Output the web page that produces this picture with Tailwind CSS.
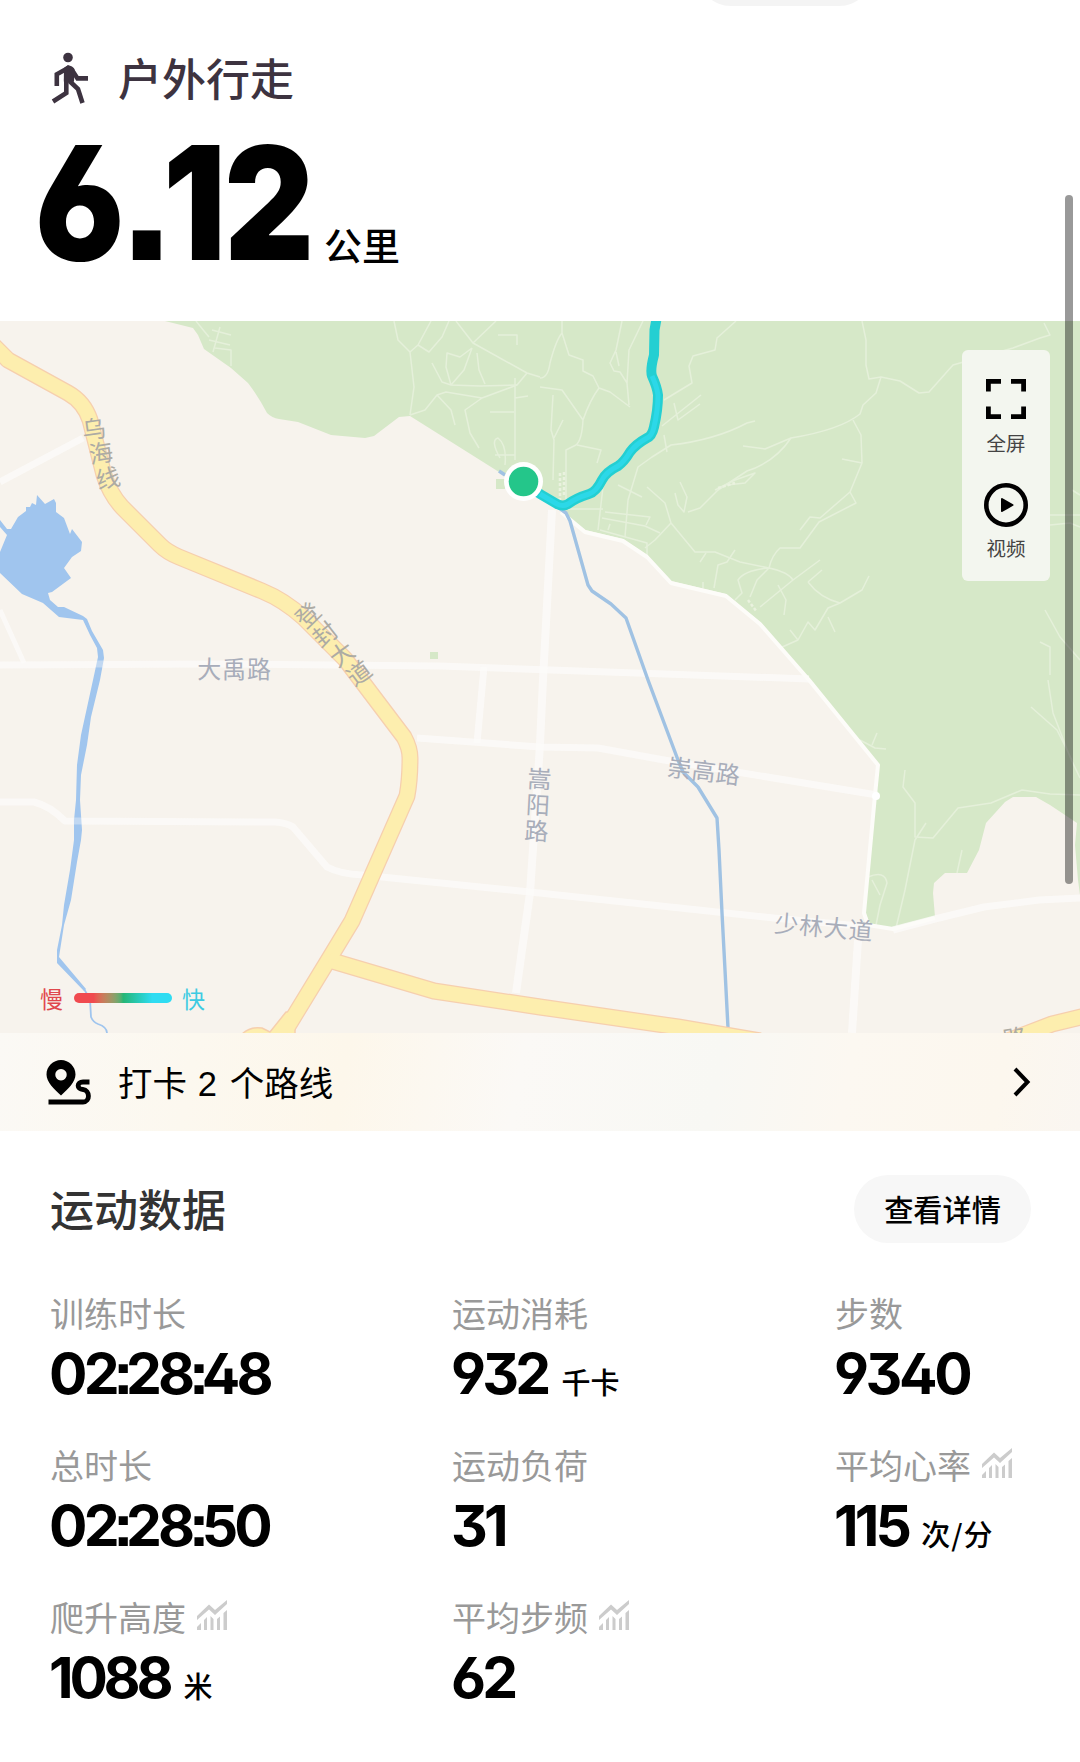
<!DOCTYPE html>
<html lang="zh-CN">
<head>
    <meta charset="UTF-8">
    <meta name="viewport" content="width=device-width, initial-scale=1.0">
    <title>户外行走</title>
    <script src="https://cdn.jsdelivr.net/npm/@tailwindcss/browser@4"></script>
</head>
<body class="relative h-[1762px] w-[1080px] overflow-hidden bg-white font-['Noto_Sans_CJK_SC',sans-serif] text-black">
    <!-- Header -->
    <header class="h-[321px] px-[51px] pt-12">
        <div class="flex h-[60px] items-center">
            <svg class="h-[52px] w-[38px]" viewBox="0 0 38 52" fill="none" stroke="#3d3340" stroke-width="4.6">
                <circle cx="17" cy="5.500" r="4.800" fill="#3d3340" stroke="none" />
                <path d="M17 13 L21 14.500 L23.500 17 L23 29.500 L20 31 L12.800 29.500 L13 16 Z" fill="#3d3340" stroke="none" />
                <path d="M18 15.500 L5.800 22.300 V34" />
                <path d="M20 16.500 L26.500 26.400 H37" />
                <path d="M15.300 27 V41 L2 49.500" />
                <path d="M18.500 29 L27 37 L31.500 51" />
            </svg>
            <h1 class="mb-[2px] ml-[29px] text-[44px] leading-[60px] font-medium text-[#3d3340]">户外行走</h1>
        </div>
        <div class="mt-[35px] -ml-4 flex items-baseline">
            <span class="w-[289px] shrink-0 origin-left scale-x-[.88] font-['Inter'] text-[158px] leading-[120px] font-black whitespace-nowrap [font-feature-settings:'cv03','cv04','ss07']"><span class="tracking-[-4px]">6</span><span class="tracking-[-11px]">.</span><span class="tracking-[-2px]">1</span>2</span>
            <span class="text-[38px] leading-[50px] font-medium">公里</span>
        </div>
    </header>

    <!-- Map -->
    <section class="relative h-[712px] overflow-hidden">
        <svg class="block h-[712px] w-[1080px]" viewBox="0 321 1080 712" fill="none">
            <rect y="321" width="1080" height="712" fill="#f7f3ed" />
            <!-- Forest -->
            <path fill="#d6e8c8" d="M165 321 L193 328 L198 335 L204 349 L231 368 L248 383 Q258 396 267 413 Q272 418 279 419 L298 422 L331 435 L365 438 L374 436 L399 417 L410 416 L499 472 L523 487 L561 510 L569 517 L585 530 L623 539 L647 555 L671 581 L726 594 L760 622 L809 680 L879 765 L876 795 L865 913 L871 925 L893 928 L935 917 L933 893 L934 883 L945 873 L967 873 L979 850 L986 823 L1005 802 L1013 797 L1036 797 L1050 805 L1077 823 L1075 845 L1078 880 L1080 895 V321 Z" />
            <!-- Trails -->
            <g stroke="#e5f0da" stroke-width="1.5" stroke-linejoin="round">
                <path d="M220 327 L213 352 M212 330 L231 335 M209 340 L230 345 M215 348 L231 350 V366 M196 321 L204 331 L209 337" />
                <path d="M394 321 L398 340 L410 352 L418 345 L431 321 M410 352 L414 387 L410 415 M418 345 L429 352 L442 337 L449 321" />
                <path d="M456 321 L473 343 L527 373 L540 377 M473 343 L496 321 M472 348 L460 357 L447 353 L446 367 L451 385 M472 348 L464 370 L451 385 M477 353 L479 370 L485 384 M432 363 L442 382 L451 385 L480 386 L517 385" />
                <path d="M410 415 L425 410 L437 395 L446 392 L482 398 L517 385 L527 373 M515 378 L515 460 M482 398 L465 410 L470 433 L479 448 M437 395 L451 410 L455 425 M498 335 H517 V345 M490 412 H514 M515 398 L528 396 M500 458 Q490 440 498 438 Q507 445 505 465 M495 455 L515 455" />
                <path d="M562 321 L562 333 Q556 340 550 363 Q548 378 540 378 M562 333 L569 355 L583 360 L583 371 L593 376 L599 388 L610 392 L630 407 M540 387 L562 390 L583 420 Q590 400 599 388 M583 420 Q582 440 576 445 L566 450 L566 505 M553 395 L551 430 L554 440 L553 480 M563 420 L554 438 M577 445 L601 450 L597 463" />
                <path d="M622 321 L616 350 L610 363 L614 371 L620 372 L627 383 M643 321 L629 350 L627 383 L629 405 M616 352 L619 366" />
                <path d="M736 321 L717 338 L715 350 L693 356 L689 366 L692 383 L664 400 M701 395 L662 426 M674 403 L678 420 L700 404 M862 321 L866 340 L866 365 L869 379 L881 377 L900 381 L919 393 L929 392 L953 365 L1013 348 L1040 338 L1050 335 L1044 323" />
                <path d="M881 377 L876 393 L863 405 L860 414 Q840 430 791 438 Q775 462 747 471 L718 490 L700 508 L688 512 M791 438 L765 449 L743 446 M853 420 L861 435 L862 463 L850 492 L856 503 L819 522 L800 548 L780 548 Q772 555 769 568 M862 463 L842 459 M850 492 L820 518 L810 517 L800 530" />
                <path d="M647 487 L665 503 L671 523 L655 540 L645 548 M671 523 L695 552 L715 552 L740 562 L769 568 Q788 572 793 580 L820 560 M769 568 L757 580 L750 597 M769 568 Q745 570 738 580 L742 593 L735 600 M778 585 L786 600 L784 615 M793 580 L760 607 M808 582 Q820 598 840 603 L862 590 L869 576 M840 603 L828 608 L815 630 L808 622 L798 640 L790 630 M828 617 L835 632 M808 582 L822 570 M798 640 L780 648 M755 421 L747 423 Q715 440 671 445 L652 457 L638 467 L628 500 L625 537" />
                <path d="M675 493 L678 505 L684 512 L687 497 L680 482 M715 490 L735 480 L755 473 L745 483 L727 485 M618 485 L642 497 M603 487 L598 530 M605 512 L650 517 L646 525 M602 518 L645 526 L660 533 M610 524 L608 530 M568 509 H603 M600 530 L647 543 L647 555 M700 562 L706 553 M714 588 L718 565 L727 562 L735 550 M703 582 V588 M664 435 L667 452" />
                <path d="M1048 680 L1053 713 L1070 757 L1080 778 M1031 707 L1057 730 L1072 760 M1045 610 L1060 637 L1080 660 M1040 642 L1050 647 V675 M1050 515 H1080 M1050 525 L1070 523 L1080 527 M1072 490 L1080 495" />
                <path d="M905 770 L903 787 L915 803 L915 837 L933 838 L958 808 L991 803 L1022 790 L1050 794 L1080 795 M926 823 L915 840 L905 890 L896 928 M962 850 L957 873 M860 740 L875 748 L886 749 M877 733 L872 745 M868 877 Q885 870 887 883 L880 905 L876 925 M872 880 L880 895" />
            </g>
            <g stroke="#eaf2df" stroke-width="2.500">
                <path d="M560 473 V500 M564 472 V495 M718 488 L735 483 M748 600 L757 612" stroke-dasharray="3 2" />
            </g>
            <!-- Minor roads -->
            <g stroke="#fcfbf9" stroke-opacity=".75" stroke-width="7" stroke-linejoin="round">
                <path d="M0 665 L220 664 L440 666 L809 679" />
                <path d="M0 482 L83 438" />
                <path d="M0 610 L24 663" stroke-width="5" />
                <path d="M552 510 L543 680 L540 745 L530 893 L516 993" stroke-width="8" />
                <path d="M484 667 L477 743" />
                <path d="M0 802 H34 Q50 806 65 821 L275 822 Q287 823 293 827 L327 867 Q340 874 362 875 L530 892 L774 918 L870 927" />
                <path d="M417 738 L540 747 L598 748 L664 760 L877 795" />
                <path d="M858 940 L852 1033" stroke-width="8" />
                <path d="M893 930 L935 919 L984 907 L1039 900 L1080 898" />
            </g>
            <path stroke="#fdfcf9" stroke-width="4" stroke-linejoin="round" d="M561 512 L585 532 L623 541 L647 557 L671 583 L726 596 L760 624 L809 680 L878 765 L875 795 L864 913 L868 925 L893 929 L935 918" />
            <circle cx="876" cy="796" r="4" fill="#fff" />
            <path fill="#d6e8c8" d="M430 652 h8 v7 h-8 Z M496 479 h9 v10 h-9 Z" />
            <!-- Reservoir and streams -->
            <path fill="#a0c5ee" d="M0 520 L7 529 L11 529 L18 517 L26 511 V507 L30 507 L32 503 L36 505 L37 495 L45 504 L54 499 L56 503 L56 512 L64 518 L70 534 L72 529 L82 542 L81 551 L72 557 L64 568 L71 578 L52 592 L48 593 L50 600 L58 607 L64 607 L83 616 L87 619 L92 631 L103 650 L104 658 L100 680 L91 717 L87 745 L81 775 L80 800 L82 830 L81 840 L77 862 L71 900 L64 925 L59 957 L86 989 L84 991 L57 963 L57 950 L62 925 L64 905 L70 870 L74 840 L74 820 L76 800 L77 765 L81 735 L93 680 L98 657 L97 648 L90 635 L83 620 L75 619 L59 617 L43 603 L22 594 L0 573 V552 L7 535 L0 527 Z" />
            <path stroke="#a0c5ee" stroke-width="1.8" d="M84 989 L90 999 L91 1017 Q93 1022 98 1024 Q107 1027 107 1033" />
            <path stroke="#f3f5f7" stroke-opacity=".4" stroke-width="7" d="M96 664 H104 M73 821 H82" />
            <path stroke="#a0c2e3" stroke-width="3.4" stroke-linejoin="round" d="M499 471 L505 475 M552 503 L566 513 L570 521 L588 585 L592 591 L611 604 L626 618 L648 680 L678 760 L683 772 L698 787 L717 818 L719 850 L722 913 L725 970 L728 1028" />
            <!-- Main roads -->
            <g stroke-linejoin="round">
                <g stroke="#f6cfae" stroke-width="17">
                    <path d="M-8 344 L8 360 L68 393 Q84 402 90 420 L104 475 Q110 494 122 507 L160 545 Q167 552 179 557 L262 591 Q284 600 304 618 L345 659 L404 737 Q410 748 410 758 Q410 780 407 796 L352 921 L329 959 L282 1036" />
                    <path d="M329 960 L434 991 L540 1007 L678 1027 L760 1041" />
                    <path d="M1005 1042 L1052 1024 L1085 1016" />
                </g>
                <path fill="#fdeeae" stroke="#f6cfae" stroke-width="1.5" d="M241 1035 Q250 1026 262 1028 L270 1032 L286 1012 H295 V1035 Z" />
                <g stroke="#fdeeae" stroke-width="14.5">
                    <path d="M-8 344 L8 360 L68 393 Q84 402 90 420 L104 475 Q110 494 122 507 L160 545 Q167 552 179 557 L262 591 Q284 600 304 618 L345 659 L404 737 Q410 748 410 758 Q410 780 407 796 L352 921 L329 959 L282 1036" />
                    <path d="M329 960 L434 991 L540 1007 L678 1027 L760 1041" />
                    <path d="M1005 1042 L1052 1024 L1085 1016" />
                </g>
            </g>
            <!-- Road names -->
            <g class="font-['Noto_Sans_CJK_SC',sans-serif] text-[24px]" fill="#a8adba" text-anchor="middle">
                <text x="234.500" y="677.500" letter-spacing="0.8">大禹路</text>
                <text transform="translate(704 771) rotate(7)" y="9" letter-spacing="0.5">崇高路</text>
                <text transform="translate(824 927) rotate(5)" y="9" letter-spacing="0.8">少林大道</text>
                <text transform="translate(539.500 779) rotate(3)" y="9">嵩</text>
                <text transform="translate(538 805) rotate(3)" y="9">阳</text>
                <text transform="translate(536.500 831) rotate(3)" y="9">路</text>
                <g fill="#adaba4">
                    <text transform="translate(94 429) rotate(-8)" y="9">乌</text>
                    <text transform="translate(101 453) rotate(-9)" y="9">海</text>
                    <text transform="translate(108 478) rotate(-13)" y="9">线</text>
                    <text transform="translate(308 615) rotate(-44)" y="9">登</text>
                    <text transform="translate(325 634) rotate(-38)" y="9">封</text>
                    <text transform="translate(342 654) rotate(-36)" y="9">大</text>
                    <text transform="translate(359 673) rotate(-36)" y="9">道</text>
                    <text transform="translate(1015 1038) rotate(-10)" y="9">路</text>
                </g>
            </g>
            <!-- Track -->
            <g stroke-linejoin="round">
                <path stroke="#24cfd2" stroke-width="10" d="M656.500 319 L654.500 330 L654 355 Q650 370 652 376 Q657 387 658 395 Q658 410 654 427 Q652 436 647 438 Q636 444 630 452 Q624 462 618 466 Q606 472 602 480 Q596 492 589 494 Q576 498 568 504 Q563 507 557 504 L540 494 L523 482" />
                <path stroke="#2cd8e8" stroke-width="5" d="M652 376 Q657 387 658 395 Q658 410 654 427 Q652 436 647 438 Q636 444 630 452 Q624 462 618 466 Q606 472 602 480 Q596 492 589 494 Q576 498 568 504 Q563 507 557 504 L540 494" />
            </g>
            <circle cx="523.500" cy="481.500" r="19.500" fill="#fff" />
            <circle cx="523.500" cy="481.500" r="14.800" fill="#24c68a" />
        </svg>

        <!-- Map controls -->
        <div class="absolute top-[29px] left-[962px] flex h-[231px] w-[88px] flex-col items-center rounded-md bg-[#f3f6ef] text-[19.5px] leading-7 text-[#444]">
            <svg class="mt-[29px] h-[40px] w-[40px]" viewBox="0 0 40 40" fill="none" stroke="#000" stroke-width="4.8">
                <path d="M2.400 12.500 V2.400 H15 M25 2.400 H37.600 V12.500 M37.600 27.500 V37.600 H25 M15 37.600 H2.400 V27.500" />
            </svg>
            <span class="mt-[10px]">全屏</span>
            <svg class="mt-[26px] h-[44px] w-[44px]" viewBox="0 0 44 44">
                <circle cx="22" cy="22" r="19.700" fill="none" stroke="#000" stroke-width="4.600" />
                <path d="M18 16 L28.500 22 L18 28 Z" stroke="#000" stroke-width="2" stroke-linejoin="round" />
            </svg>
            <span class="mt-[7px]">视频</span>
        </div>

        <!-- Pace legend -->
        <div class="absolute top-[661px] left-[40px] flex h-8 items-center text-[23px] leading-8">
            <span class="text-[#e0474c]">慢</span>
            <span class="mr-[10px] ml-[11px] h-[10px] w-[98px] rounded-full bg-linear-to-r from-[#f04a4f] from-20% via-[#27b574] via-50% to-[#2fdcf2] to-80%"></span>
            <span class="text-[#3ecbe2]">快</span>
        </div>
    </section>

    <!-- Route check-in -->
    <section class="flex h-[98px] items-center bg-[linear-gradient(100deg,#fbf9f5_0%,#fcf8ef_18%,#fdf7eb_32%,#fbf9f6_48%,#f8f8f4_66%,#fcf8f1_78%,#fcf7ee_92%,#faf6f1_100%)] pr-[49px] pl-[46px]">
        <svg class="h-[45px] w-[45px]" viewBox="0 0 45 45">
            <path fill-rule="evenodd" d="M15 0 C23 0 29.500 6.500 29.500 14.500 C29.500 22 22 29 15 35.500 C8 29 0.500 22 0.500 14.500 C0.500 6.500 7 0 15 0 Z M15 9 a5.700 5.700 0 1 0 0.010 0 Z" />
            <path fill="none" stroke="#000" stroke-width="4.800" d="M43.500 22 H37 C30.500 22 30.500 29.300 37 29.500 C44 30 44.500 42 37 42 H2.500" />
        </svg>
        <span class="ml-[27px] flex-1 text-[34.5px] leading-[50px]">打卡 <span class="mr-[5px] ml-[3px] font-['Liberation_Sans']">2</span> 个路线</span>
        <svg class="h-[30px] w-[18px]" viewBox="0 0 18 30" fill="none" stroke="#000" stroke-width="4">
            <path d="M2 2 L14.500 15 L2 28" />
        </svg>
    </section>

    <!-- Workout data -->
    <section class="pt-11 pl-[50px]">
        <div class="flex h-[68px] items-center justify-between pr-[49px]">
            <h2 class="mb-[3px] text-[44px] leading-[60px] font-medium text-[#333]">运动数据</h2>
            <button class="h-[68px] w-[177px] rounded-full bg-[#f7f7f7] pb-[3px] text-[29.2px] leading-10 font-medium">查看详情</button>
        </div>

        <div class="mt-[46px] grid auto-rows-[152px] grid-cols-[402px_383px_1fr]">
            <div>
                <p class="h-12 text-[34px] leading-12 text-[#999]">训练时长</p>
                <p class="mt-[5px] -ml-px flex h-16 items-baseline leading-16"><span class="font-['Inter'] text-[57px] font-bold tracking-[-3.8px] [font-feature-settings:'cv02','cv03','cv04','cv09','ss07']">02<span class="-mr-[3px] -ml-[2px]">:</span>28<span class="-mr-[3px] -ml-[2px]">:</span>48</span></p>
            </div>
            <div>
                <p class="h-12 text-[34px] leading-12 text-[#999]">运动消耗</p>
                <p class="mt-[5px] -ml-px flex h-16 items-baseline leading-16"><span class="font-['Inter'] text-[57px] font-bold tracking-[-3.8px] [font-feature-settings:'cv02','cv03','cv04','cv09','ss07']">932</span><span class="ml-[14px] text-[29px] font-medium">千卡</span></p>
            </div>
            <div>
                <p class="h-12 text-[34px] leading-12 text-[#999]">步数</p>
                <p class="mt-[5px] -ml-px flex h-16 items-baseline leading-16"><span class="font-['Inter'] text-[57px] font-bold tracking-[-3.4px] [font-feature-settings:'cv02','cv03','cv04','cv09','ss07']">9340</span></p>
            </div>
            <div>
                <p class="h-12 text-[34px] leading-12 text-[#999]">总时长</p>
                <p class="mt-[5px] -ml-px flex h-16 items-baseline leading-16"><span class="font-['Inter'] text-[57px] font-bold tracking-[-3.8px] [font-feature-settings:'cv02','cv03','cv04','cv09','ss07']">02<span class="-mr-[3px] -ml-[2px]">:</span>28<span class="-mr-[3px] -ml-[2px]">:</span>50</span></p>
            </div>
            <div>
                <p class="h-12 text-[34px] leading-12 text-[#999]">运动负荷</p>
                <p class="mt-[5px] -ml-px flex h-16 items-baseline leading-16"><span class="font-['Inter'] text-[57px] font-bold tracking-[-3.8px] [font-feature-settings:'cv02','cv03','cv04','cv09','ss07']">31</span></p>
            </div>
            <div>
                <p class="flex h-12 items-center text-[34px] leading-12 text-[#999]">平均心率
                    <svg class="mb-1 ml-[11px] h-[30px] w-[30px]" viewBox="0 0 30 30" fill="#ccc">
                        <path d="M0 16 L12 4.500 L18 10 L30 0 V4 L18 15 L12 9.500 L0 20 Z M0 27 L4 23 V30 H0 Z M7 20 L10 17 V30 H7 Z M13.500 16 L16.500 19 V30 H13.500 Z M20 19 L23 16.500 V30 H20 Z M26.500 13 L30 10 V30 H26.500 Z" />
                    </svg>
                </p>
                <p class="mt-[5px] -ml-px flex h-16 items-baseline leading-16"><span class="font-['Inter'] text-[57px] font-bold tracking-[-3.8px] [font-feature-settings:'cv02','cv03','cv04','cv09','ss07']">115</span><span class="ml-[13px] text-[29px] font-medium">次<span class="mx-px">/</span>分</span></p>
            </div>
            <div>
                <p class="flex h-12 items-center text-[34px] leading-12 text-[#999]">爬升高度
                    <svg class="mb-1 ml-[11px] h-[30px] w-[30px]" viewBox="0 0 30 30" fill="#ccc">
                        <path d="M0 16 L12 4.500 L18 10 L30 0 V4 L18 15 L12 9.500 L0 20 Z M0 27 L4 23 V30 H0 Z M7 20 L10 17 V30 H7 Z M13.500 16 L16.500 19 V30 H13.500 Z M20 19 L23 16.500 V30 H20 Z M26.500 13 L30 10 V30 H26.500 Z" />
                    </svg>
                </p>
                <p class="mt-[5px] -ml-px flex h-16 items-baseline leading-16"><span class="font-['Inter'] text-[57px] font-bold tracking-[-4.2px] [font-feature-settings:'cv02','cv03','cv04','cv09','ss07']">1088</span><span class="ml-[14px] text-[29px] font-medium">米</span></p>
            </div>
            <div>
                <p class="flex h-12 items-center text-[34px] leading-12 text-[#999]">平均步频
                    <svg class="mb-1 ml-[11px] h-[30px] w-[30px]" viewBox="0 0 30 30" fill="#ccc">
                        <path d="M0 16 L12 4.500 L18 10 L30 0 V4 L18 15 L12 9.500 L0 20 Z M0 27 L4 23 V30 H0 Z M7 20 L10 17 V30 H7 Z M13.500 16 L16.500 19 V30 H13.500 Z M20 19 L23 16.500 V30 H20 Z M26.500 13 L30 10 V30 H26.500 Z" />
                    </svg>
                </p>
                <p class="mt-[5px] -ml-px flex h-16 items-baseline leading-16"><span class="font-['Inter'] text-[57px] font-bold tracking-[-3.8px] [font-feature-settings:'cv02','cv03','cv04','cv09','ss07']">62</span></p>
            </div>
        </div>
    </section>

    <!-- Pill scrolled past the top edge, and the scrollbar -->
    <div class="absolute -top-[62px] left-[697px] h-[68px] w-[176px] rounded-full bg-[#f4f4f4]"></div>
    <div class="absolute top-[195px] left-[1065px] h-[689px] w-2 rounded-full bg-black/40"></div>
</body>
</html>
